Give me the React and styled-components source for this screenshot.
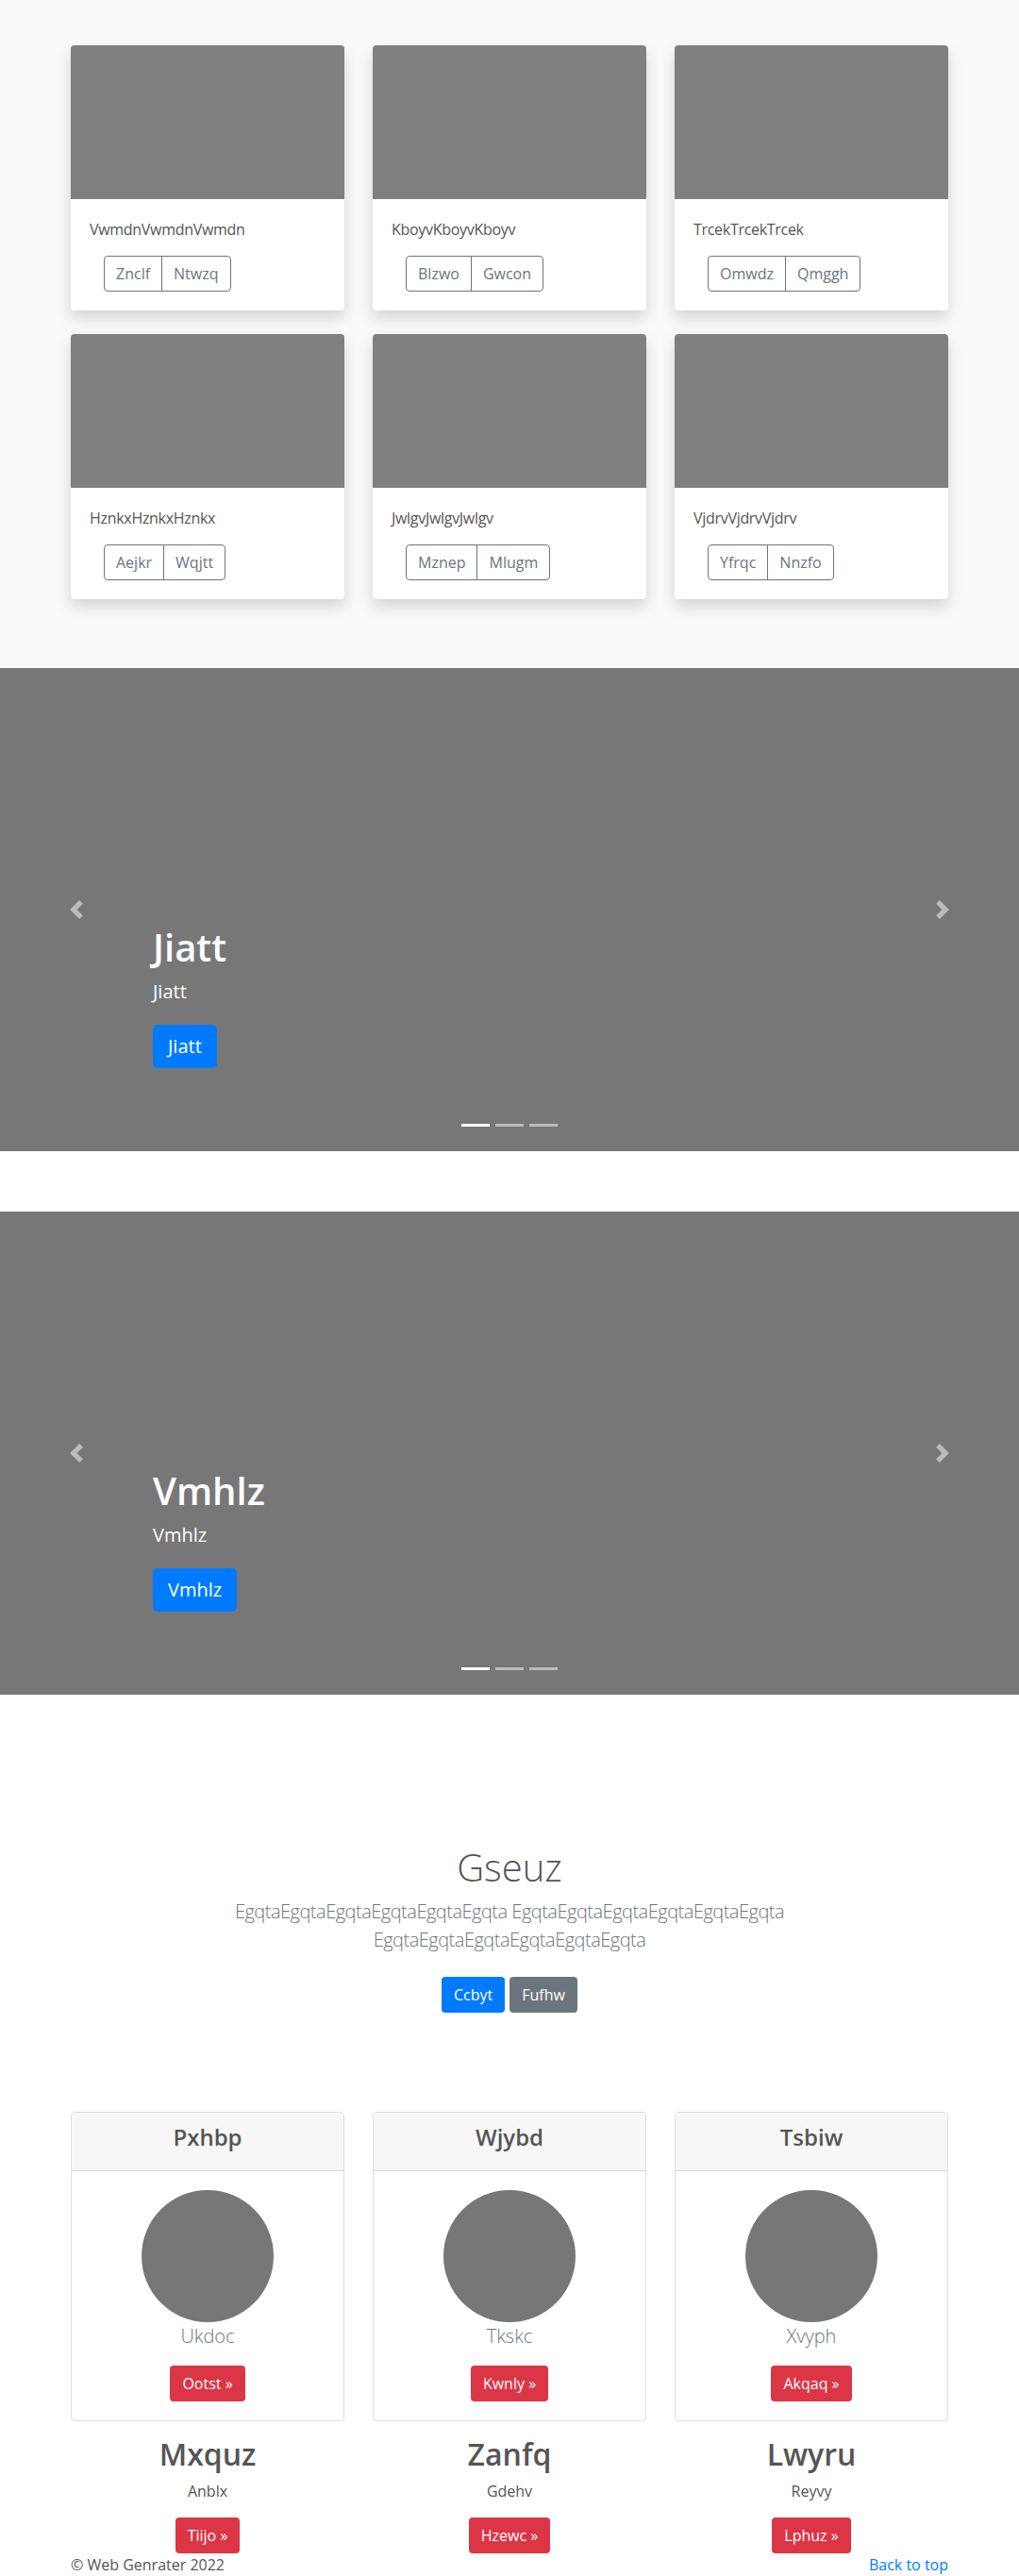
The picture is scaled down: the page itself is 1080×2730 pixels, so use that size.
import React from 'react';
import styled, { createGlobalStyle } from 'styled-components';

// --- Data ---
const albumCards = [
    { text: 'VwmdnVwmdnVwmdn', left: 'Znclf', right: 'Ntwzq' },
    { text: 'KboyvKboyvKboyv', left: 'Blzwo', right: 'Gwcon' },
    { text: 'TrcekTrcekTrcek', left: 'Omwdz', right: 'Qmggh' },
    { text: 'HznkxHznkxHznkx', left: 'Aejkr', right: 'Wqjtt' },
    { text: 'JwlgvJwlgvJwlgv', left: 'Mznep', right: 'Mlugm' },
    { text: 'VjdrvVjdrvVjdrv', left: 'Yfrqc', right: 'Nnzfo' }
];

const slides = ['Jiatt', 'Vmhlz'];

const pricing = [
    { head: 'Pxhbp', name: 'Ukdoc', cta: 'Ootst' },
    { head: 'Wjybd', name: 'Tkskc', cta: 'Kwnly' },
    { head: 'Tsbiw', name: 'Xvyph', cta: 'Akqaq' }
];

const marketing = [
    { title: 'Mxquz', text: 'Anblx', cta: 'Tiijo' },
    { title: 'Zanfq', text: 'Gdehv', cta: 'Hzewc' },
    { title: 'Lwyru', text: 'Reyvy', cta: 'Lphuz' }
];

const egqta = 'EgqtaEgqtaEgqtaEgqtaEgqtaEgqta';

// --- Global ---
const GlobalStyle = createGlobalStyle`
  *, *::before, *::after { box-sizing: border-box; }
  body {
    margin: 0;
    font-family: "Open Sans", "Noto Sans", sans-serif;
    font-size: 16px;
    line-height: 1.5;
    color: #555;
    background: #fff;
  }
`;

const Container = styled.div`
  width: 960px;
  max-width: 100%;
  margin: 0 auto;
  padding: 0 15px;
`;

const ThreeCols = styled.div`
  display: grid;
  grid-template-columns: repeat(3, 1fr);
  column-gap: 30px;
  row-gap: ${({ $rowGap }) => $rowGap || 0}px;
`;

// --- Album ---
const AlbumSection = styled.section`
  background: #f8f9fa;
  padding: 48px 0 73px;
`;

const AlbumCard = styled.div`
  background: #fff;
  border-radius: 4px;
  overflow: hidden;
  box-shadow: 0 8px 16px rgba(0, 0, 0, 0.15);
`;

const Thumb = styled.div`
  height: 163px;
  background: #808080;
`;

const CardBody = styled.div`
  padding: 20px;
`;

const CardText = styled.p`
  margin: 0 0 16px;
  font-size: 16px;
  color: #555;
  letter-spacing: -0.3px;
`;

const BtnGroup = styled.div`
  display: inline-flex;
  margin-left: 15px;
`;

const OutlineBtn = styled.button`
  font-family: inherit;
  font-size: 16px;
  line-height: 24px;
  padding: 6px 12px;
  color: #6c757d;
  background: transparent;
  border: 1px solid #6c757d;
  border-radius: 4px;
  &:first-child { border-top-right-radius: 0; border-bottom-right-radius: 0; }
  &:last-child { border-top-left-radius: 0; border-bottom-left-radius: 0; margin-left: -1px; }
`;

// --- Carousel ---
const Carousel = styled.div`
  position: relative;
  height: 512px;
  background: #777;
  margin-bottom: 64px;
`;

const Caption = styled.div`
  position: absolute;
  left: 15%;
  right: 15%;
  bottom: 48px;
  padding: 20px 0;
  color: #fff;
  display: flex;
  flex-direction: column;
  align-items: flex-start;
`;

const SlideTitle = styled.h1`
  margin: 0 0 8px;
  font-size: 40px;
  font-weight: 600;
  line-height: 1.2;
`;

const SlideText = styled.p`
  margin: 0 0 20px;
  font-size: 20px;
  line-height: 30px;
`;

const LargeBtn = styled.a`
  display: inline-block;
  font-size: 20px;
  line-height: 30px;
  padding: 8px 16px;
  border-radius: 5px;
  background: #007bff;
  color: #fff;
  text-decoration: none;
  margin-bottom: 20px;
`;

const Control = styled.span`
  position: absolute;
  top: 0;
  bottom: 0;
  width: 15%;
  ${({ $side }) => ($side === 'left' ? 'left: 0;' : 'right: 0;')}
  display: flex;
  align-items: center;
  justify-content: center;
  opacity: 0.5;
`;

const Indicators = styled.div`
  position: absolute;
  left: 0;
  right: 0;
  bottom: 26px;
  display: flex;
  justify-content: center;
  gap: 6px;
`;

const Indicator = styled.span`
  width: 30px;
  height: 3px;
  background: ${({ $active }) => ($active ? '#fff' : 'rgba(255, 255, 255, 0.5)')};
`;

const Chevron = ({ dir }) => (
    <svg width="20" height="20" viewBox="0 0 8 8" fill="#fff">
        {dir === 'left'
            ? <path d="M5.25 0l-4 4 4 4 1.5-1.5L4.25 4l2.5-2.5L5.25 0z" />
            : <path d="M2.75 0l-1.5 1.5L3.75 4l-2.5 2.5L2.75 8l4-4-4-4z" />}
    </svg>
);

// --- Jumbotron ---
const Jumbo = styled.section`
  padding: 95px 0 97px;
  text-align: center;
`;

const JumboInner = styled.div`
  max-width: 680px;
  margin: 0 auto;
  padding: 0 15px;
`;

const JumboHeading = styled.h1`
  margin: 0 0 8px;
  font-size: 40px;
  font-weight: 300;
  line-height: 1.2;
  color: #555;
`;

const Lead = styled.p`
  margin: 0 0 16px;
  font-size: 20px;
  font-weight: 300;
  line-height: 30px;
  letter-spacing: -0.5px;
  color: #6c757d;
`;

const BtnRow = styled.div`
  display: flex;
  justify-content: center;
  gap: 5px;
  padding: 8px 0;
`;

const Btn = styled.a`
  display: inline-block;
  font-size: 16px;
  line-height: 24px;
  padding: 6px 12px;
  border: 1px solid transparent;
  border-radius: 4px;
  color: #fff;
  text-decoration: none;
  background: ${({ $variant }) =>
        $variant === 'secondary' ? '#6c757d' : $variant === 'danger' ? '#dc3545' : '#007bff'};
`;

// --- Pricing ---
const PriceCard = styled.div`
  border: 1px solid rgba(0, 0, 0, 0.125);
  border-radius: 4px;
  overflow: hidden;
  text-align: center;
`;

const PriceHeader = styled.div`
  background: #f7f7f7;
  border-bottom: 1px solid rgba(0, 0, 0, 0.125);
  padding: 12px 20px;
`;

const PriceTitle = styled.h4`
  margin: 0 0 8px;
  font-size: 24px;
  font-weight: 600;
  line-height: 1.2;
  color: #555;
`;

const PriceBody = styled.div`
  padding: 20px;
  display: flex;
  flex-direction: column;
  align-items: center;
`;

const Avatar = styled.div`
  width: 140px;
  height: 140px;
  border-radius: 50%;
  background: #777;
`;

const AvatarName = styled.p`
  margin: 0 0 16px;
  font-size: 20px;
  font-weight: 300;
  line-height: 30px;
  color: #6c757d;
`;

// --- Marketing ---
const Marketing = styled.div`
  padding-top: 16px;
`;

const MarketCol = styled.div`
  text-align: center;
`;

const MarketTitle = styled.h2`
  margin: 0 0 8px;
  font-size: 32px;
  font-weight: 600;
  line-height: 1.2;
  color: #555;
`;

const MarketText = styled.p`
  margin: 0 12px 16px;
  font-size: 16px;
  line-height: 24px;
`;

// --- Footer ---
const Footer = styled.footer`
  display: flex;
  justify-content: space-between;
  font-size: 16px;
  line-height: 24px;
  color: #555;
`;

const TopLink = styled.a`
  color: #007bff;
  text-decoration: none;
`;

const App = () => (
    <>
        <GlobalStyle />

        <AlbumSection>
            <Container>
                <ThreeCols $rowGap={25}>
                    {albumCards.map((c) => (
                        <AlbumCard key={c.text}>
                            <Thumb />
                            <CardBody>
                                <CardText>{c.text}</CardText>
                                <BtnGroup>
                                    <OutlineBtn>{c.left}</OutlineBtn>
                                    <OutlineBtn>{c.right}</OutlineBtn>
                                </BtnGroup>
                            </CardBody>
                        </AlbumCard>
                    ))}
                </ThreeCols>
            </Container>
        </AlbumSection>

        {slides.map((s) => (
            <Carousel key={s}>
                <Control $side="left"><Chevron dir="left" /></Control>
                <Control $side="right"><Chevron dir="right" /></Control>
                <Caption>
                    <SlideTitle>{s}</SlideTitle>
                    <SlideText>{s}</SlideText>
                    <LargeBtn href="#">{s}</LargeBtn>
                </Caption>
                <Indicators>
                    <Indicator $active />
                    <Indicator />
                    <Indicator />
                </Indicators>
            </Carousel>
        ))}

        <Jumbo>
            <JumboInner>
                <JumboHeading>Gseuz</JumboHeading>
                <Lead>{egqta} {egqta} {egqta}</Lead>
                <BtnRow>
                    <Btn href="#">Ccbyt</Btn>
                    <Btn href="#" $variant="secondary">Fufhw</Btn>
                </BtnRow>
            </JumboInner>
        </Jumbo>

        <Container>
            <ThreeCols>
                {pricing.map((p) => (
                    <PriceCard key={p.head}>
                        <PriceHeader>
                            <PriceTitle>{p.head}</PriceTitle>
                        </PriceHeader>
                        <PriceBody>
                            <Avatar />
                            <AvatarName>{p.name}</AvatarName>
                            <Btn href="#" $variant="danger">{p.cta} &raquo;</Btn>
                        </PriceBody>
                    </PriceCard>
                ))}
            </ThreeCols>

            <Marketing>
                <ThreeCols>
                    {marketing.map((m) => (
                        <MarketCol key={m.title}>
                            <MarketTitle>{m.title}</MarketTitle>
                            <MarketText>{m.text}</MarketText>
                            <Btn href="#" $variant="danger">{m.cta} &raquo;</Btn>
                        </MarketCol>
                    ))}
                </ThreeCols>
            </Marketing>

            <Footer>
                <span>&copy; Web Genrater 2022</span>
                <TopLink href="#">Back to top</TopLink>
            </Footer>
        </Container>
    </>
);

export default App;
